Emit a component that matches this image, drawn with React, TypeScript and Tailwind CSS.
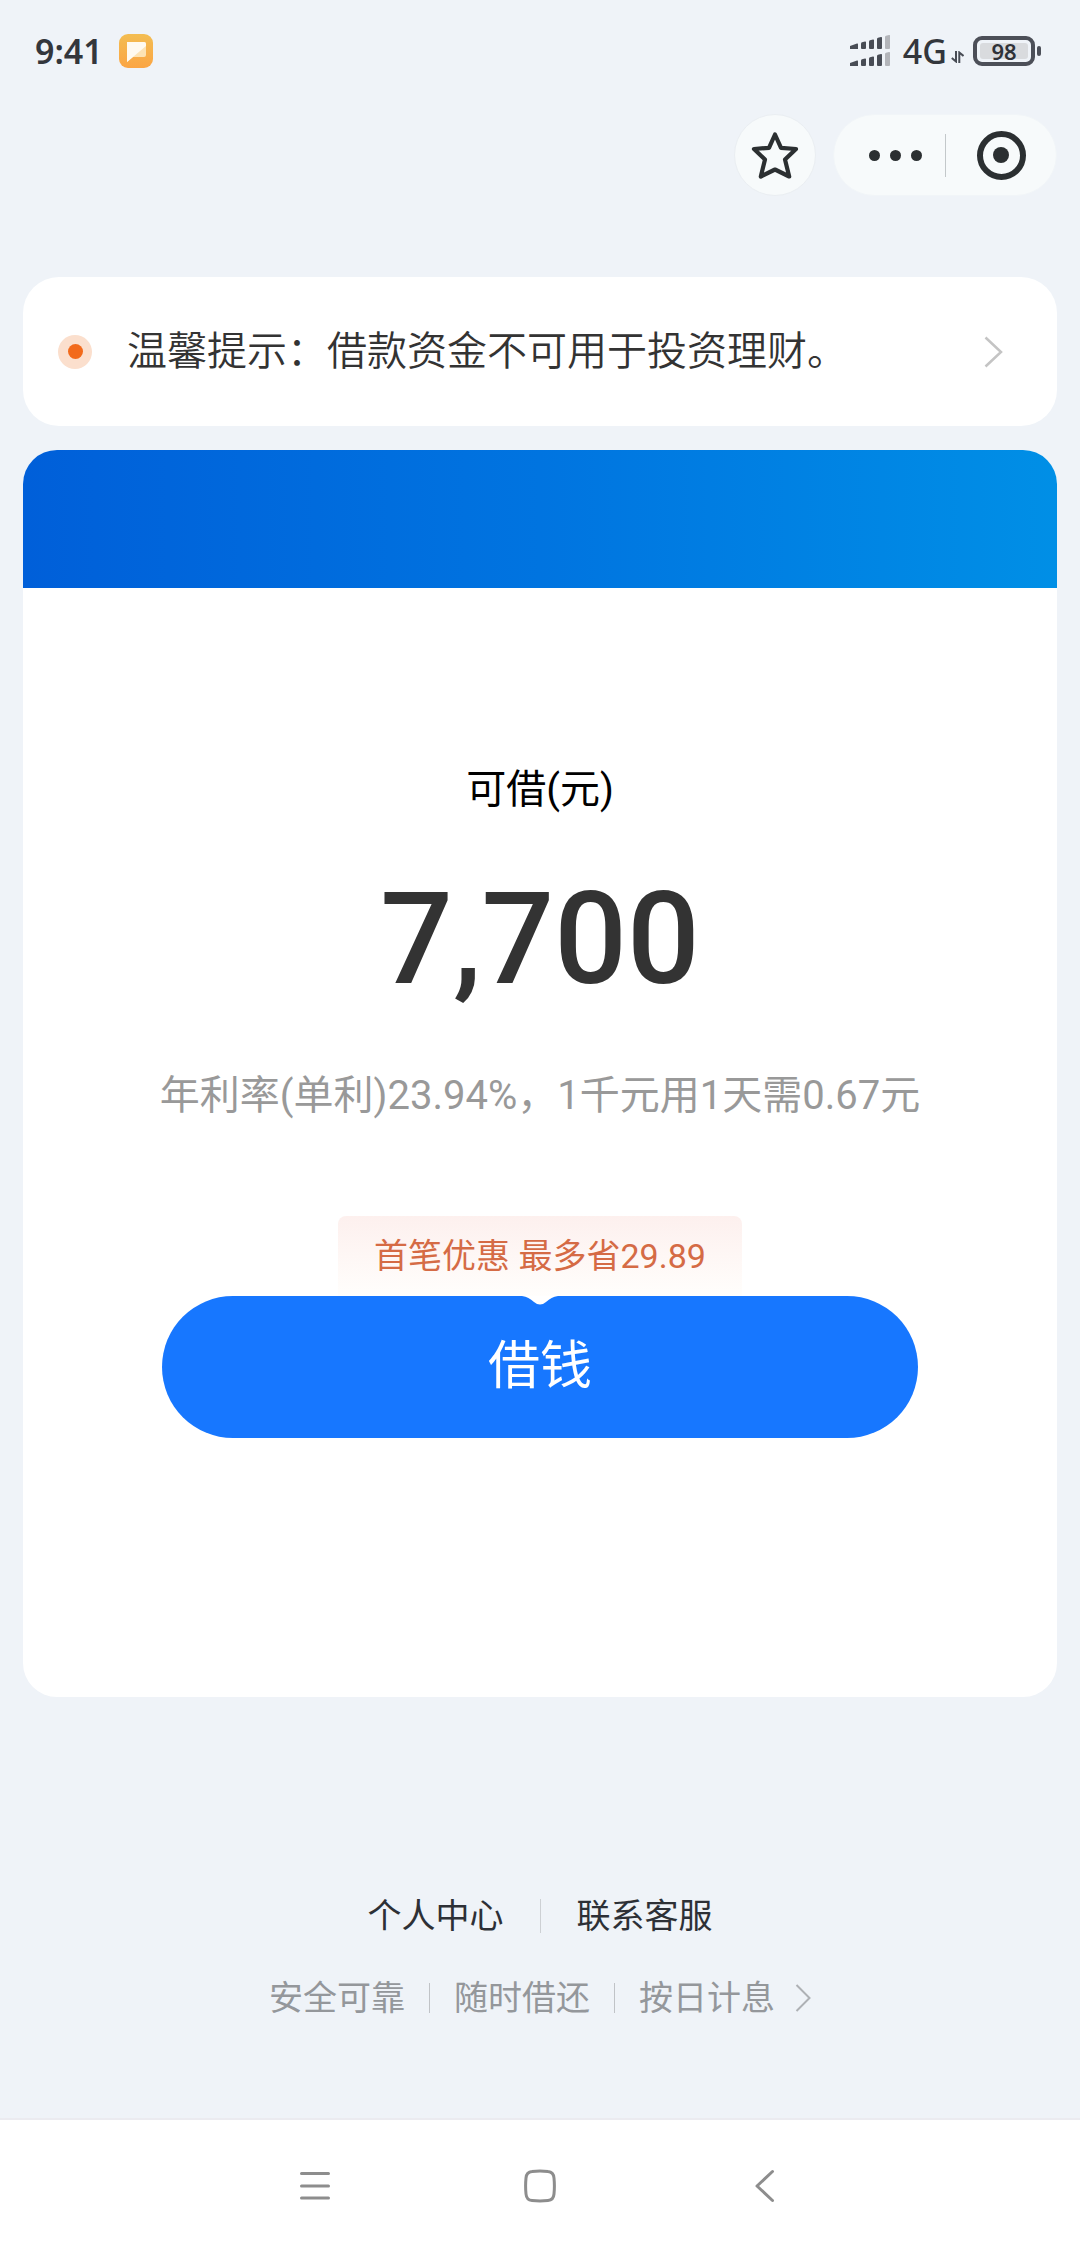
import React from "react";

const services = ["安全可靠", "随时借还", "按日计息"];

function NoteIcon() {
  return (
    <svg width="34" height="34" viewBox="0 0 34 34" aria-hidden="true">
      <defs>
        <linearGradient id="note-bg" x1="0" y1="0" x2="0" y2="1">
          <stop offset="0" stopColor="#f3bd52" />
          <stop offset="1" stopColor="#fba544" />
        </linearGradient>
      </defs>
      <rect width="34" height="34" rx="9" fill="url(#note-bg)" />
      <path d="M8 8h17a2 2 0 0 1 2 2v11a2 2 0 0 1-2 2H14l-6 5z" fill="#fde3b4" />
      <path d="M8 8h17a2 2 0 0 1 2 2v2L8 28z" fill="#fffaf0" />
    </svg>
  );
}

function SignalIcon() {
  return (
    <svg width="41" height="32" viewBox="0 0 41 32" fill="#484c55" aria-hidden="true">
      {[0, 17].map((y) => (
        <g key={y} transform={`translate(0 ${y})`}>
          <path d="M0 11l7-2.5q1-.3 1 .7V14H0z" />
          <path d="M11 8.5q0-1 1-1.300l3-.7q1-.2 1 .8V13q0 1-1 1h-3q-1 0-1-1z" />
          <path d="M19 6.500q0-1 1-1.300l3-.7q1-.2 1 .8V13q0 1-1 1h-3q-1 0-1-1z" />
          <path d="M27 4q0-1 1-1.300l3-.7q1-.2 1 .8V13q0 1-1 1h-3q-1 0-1-1z" />
          <path d="M35 2q0-1 1-1.300l3-.7q1-.2 1 .8V13q0 1-1 1h-3q-1 0-1-1z" fill="#b3b5ba" />
        </g>
      ))}
    </svg>
  );
}

function DataArrows() {
  return (
    <svg width="13" height="12" viewBox="0 0 13 12" fill="none" stroke="#484c55" strokeWidth="2" aria-hidden="true">
      <path d="M5 0v10.500L.8 7" />
      <path d="M8.300 12V1.500L12.500 5" />
    </svg>
  );
}

function Battery() {
  return (
    <div className="flex items-center gap-0.5">
      <div className="flex h-[30px] w-[62px] rounded-[9px] border-4 border-[#4c4f58] p-[3px]">
        <span className="flex flex-1 items-center justify-center rounded-[3px] bg-[#d9dbde] text-[22px] leading-none font-semibold text-[#2f3238]">
          98
        </span>
      </div>
      <span className="h-[10px] w-1 rounded-sm bg-[#4c4f58]" />
    </div>
  );
}

function StatusBar() {
  return (
    <header className="flex h-[102px] items-center justify-between pr-[39px] pl-[35px] font-['Noto_Sans','Noto_Sans_CJK_SC',sans-serif] text-[#33363c]">
      <div className="flex items-center gap-4">
        <time className="text-[34px] leading-none font-semibold">9:41</time>
        <NoteIcon />
      </div>
      <div className="flex items-center">
        <SignalIcon />
        <span className="ml-3 text-[34px] leading-none font-medium">4G</span>
        <span className="mt-3 mr-[9px] ml-1">
          <DataArrows />
        </span>
        <Battery />
      </div>
    </header>
  );
}

function TopActions() {
  return (
    <div className="mt-3 flex justify-end gap-[17px] pr-[23px]">
      <button
        aria-label="收藏"
        className="flex size-[82px] items-center justify-center rounded-full border border-[#eaeef2] bg-[#f7fafb]"
      >
        <svg width="48" height="48" viewBox="0 0 48 48" fill="none" stroke="#2b2f31" strokeWidth="4.200" strokeLinejoin="round">
          <path d="M24 3.500l6 13.300 15 1.200-11 10.500 4.200 17L24 38.500 9.800 45.500 14 28.500 3 18l15-1.200z" />
        </svg>
      </button>
      <div className="flex h-[82px] w-[224px] items-center rounded-full border border-[#f1f5f8] bg-[#f7fafb]">
        <button aria-label="更多" className="flex h-full w-[111px] items-center justify-center gap-[10px] pl-3">
          <span className="size-[11px] rounded-full bg-[#2b2f31]" />
          <span className="size-[11px] rounded-full bg-[#2b2f31]" />
          <span className="size-[11px] rounded-full bg-[#2b2f31]" />
        </button>
        <span className="h-[43px] w-px bg-[#c3c8ca]" />
        <button aria-label="关闭" className="flex h-full flex-1 items-center justify-center">
          <span className="flex size-[49px] items-center justify-center rounded-full border-[6px] border-[#2b2f31]">
            <span className="size-4 rounded-full bg-[#2b2f31]" />
          </span>
        </button>
      </div>
    </div>
  );
}

function Notice() {
  return (
    <a href="#notice" className="flex h-[149px] items-center rounded-[36px] bg-white pr-[54px] pl-[35px]">
      <span className="flex size-[34px] items-center justify-center rounded-full bg-[#fbdfcd]">
        <span className="size-[15px] rounded-full bg-[#f26a1b]" />
      </span>
      <span className="ml-[35px] flex-1 text-[40px] leading-none font-[350] text-[#333333]">
        温馨提示：借款资金不可用于投资理财。
      </span>
      <svg width="19" height="32" viewBox="0 0 19 32" fill="none" stroke="#c4c4c4" strokeWidth="2.500" aria-hidden="true">
        <path d="M1.500 1.500L17 16 1.500 30.500" />
      </svg>
    </a>
  );
}

function LoanCard() {
  return (
    <section className="flex flex-col overflow-hidden rounded-[34px] bg-white pb-[259px]">
      <div className="h-[138px] bg-gradient-to-r from-[#005fd9] via-[#0074e0] to-[#008fe6]" />
      <div className="flex flex-col items-center pt-[174px]">
        <h1 className="text-[40px] leading-[56px] text-black">可借(元)</h1>
        <p className="mt-[57px] text-[128px] leading-[128px] font-medium text-[#333333]">7,700</p>
        <p className="mt-[65px] text-[40px] leading-[56px] text-[#999999]">年利率(单利)23.94%，1千元用1天需0.67元</p>
        <p className="mt-[92px] flex h-[80px] items-center rounded-t-lg bg-gradient-to-b from-[#fdf0ee] to-[#fffefc] px-9 text-[34px] leading-none text-[#d56b45]">
          首笔优惠 最多省29.89
        </p>
        <div className="w-full px-[139px]">
          <button className="relative h-[142px] w-full rounded-full bg-[#1777ff] text-[52px] leading-none text-white">
            <svg
              className="absolute top-0 left-1/2 -translate-x-1/2"
              width="36"
              height="9"
              viewBox="0 0 36 9"
              fill="#ffffff"
              aria-hidden="true"
            >
              <path d="M0 0h36c-5 .5-8 2.500-12 6q-6 5-12 0C8 2.500 5 .5 0 0z" />
            </svg>
            借钱
          </button>
        </div>
      </div>
    </section>
  );
}

function FooterLinks() {
  return (
    <footer className="mt-[195px] flex flex-col items-center gap-[34px] pb-[90px] text-[34px] leading-[48px]">
      <nav className="flex items-center gap-9 text-[#2d3036]">
        <a href="#profile">个人中心</a>
        <span className="h-[34px] w-px bg-[#cdd0d4]" />
        <a href="#support">联系客服</a>
      </nav>
      <a href="#about" className="flex items-center text-[#94979b]">
        {services.map((name, i) => (
          <React.Fragment key={name}>
            {i > 0 && <span className="mx-6 h-[30px] w-px bg-[#c0c3c7]" />}
            <span>{name}</span>
          </React.Fragment>
        ))}
        <svg className="ml-5" width="16" height="28" viewBox="0 0 16 28" fill="none" stroke="#aeb1b5" strokeWidth="2" aria-hidden="true">
          <path d="M1.500 1L14.500 14 1.500 27" />
        </svg>
      </a>
    </footer>
  );
}

function SystemNav() {
  return (
    <nav className="mt-auto flex h-[130px] items-center justify-center gap-[185px] border-t-2 border-[#ebebf0] bg-white pt-1">
      <button aria-label="最近任务" className="flex w-10 justify-center">
        <svg width="32" height="34" viewBox="0 0 32 34" stroke="#8d8d8d" strokeWidth="3" strokeLinecap="round">
          <path d="M2.500 4.500h27M2.500 17h27M2.500 29h27" />
        </svg>
      </button>
      <button aria-label="主屏幕" className="flex w-10 justify-center">
        <svg width="34" height="34" viewBox="0 0 34 34" fill="none" stroke="#8d8d8d" strokeWidth="3">
          <path d="M9 2.500Q17 1.500 25 2.500 30.500 3 31 9q.8 8 0 16-.5 6-6 6.500-8 .8-16 0Q3.500 31 3 25q-.8-8 0-16 .5-6 6-6.500z" />
        </svg>
      </button>
      <button aria-label="返回" className="flex w-10 justify-center">
        <svg width="20" height="34" viewBox="0 0 20 34" fill="none" stroke="#8d8d8d" strokeWidth="3" strokeLinecap="round" strokeLinejoin="round">
          <path d="M17.500 2.500L2 17l15.500 14.500" />
        </svg>
      </button>
    </nav>
  );
}

export default function App() {
  return (
    <div className="flex min-h-screen flex-col bg-[#eff3f8] font-['Roboto','Noto_Sans_CJK_SC',sans-serif]">
      <StatusBar />
      <TopActions />
      <main className="mt-[81px] flex flex-col gap-6 px-[23px]">
        <Notice />
        <LoanCard />
      </main>
      <FooterLinks />
      <SystemNav />
    </div>
  );
}
